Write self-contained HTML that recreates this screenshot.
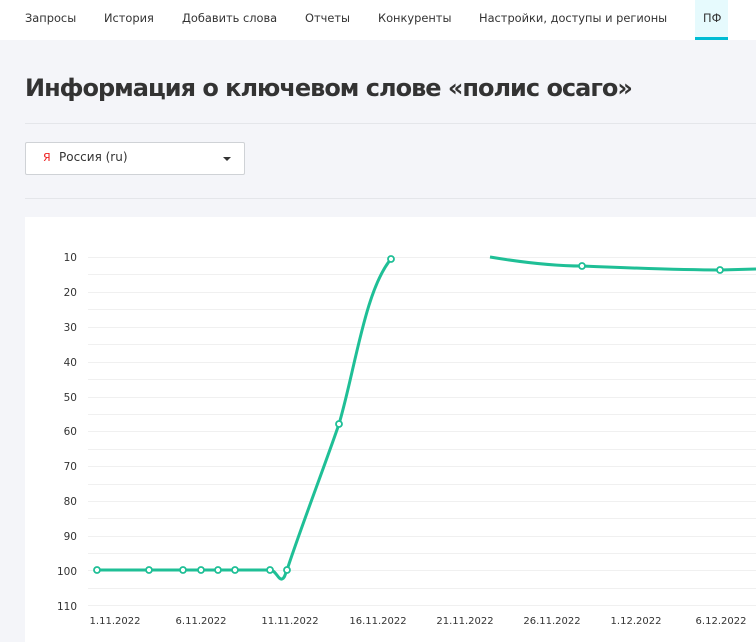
<!DOCTYPE html>
<html><head><meta charset="utf-8"><style>
*{margin:0;padding:0;box-sizing:border-box}
body{width:756px;height:642px;overflow:hidden;background:#f4f5f9;font-family:"DejaVu Sans","Liberation Sans",sans-serif;color:#333;position:relative}
.nav{position:absolute;left:0;top:0;width:756px;height:40px;background:#fff}
.nav span{position:absolute;top:11px;font-size:11.4px;color:#333;white-space:nowrap}
.act{position:absolute;left:695px;top:0;width:33px;height:40px;background:#e6fafd;border-bottom:3px solid #00bcd4}
h1{position:absolute;left:25px;top:74px;font-size:24px;font-weight:bold;color:#333;white-space:nowrap;letter-spacing:-1px}
.hr{position:absolute;left:25px;width:731px;height:1px;background:#e4e6ea}
.sel{position:absolute;left:25px;top:142px;width:220px;height:33px;background:#fff;border:1px solid #cfd2d6;border-radius:2px}
.sel .y{position:absolute;left:17px;top:8px;font-size:11px;color:#e22}
.sel .t{position:absolute;left:33px;top:7px;font-size:12px;color:#333}
.sel .c{position:absolute;left:197px;top:14px;width:0;height:0;border-left:4px solid transparent;border-right:4px solid transparent;border-top:4px solid #333}
.card{position:absolute;left:25px;top:217px;width:731px;height:425px;background:#fff}
</style></head><body>
<div class="nav">
<div class="act"></div>
<span style="left:25px">Запросы</span>
<span style="left:104px">История</span>
<span style="left:182px">Добавить слова</span>
<span style="left:305px">Отчеты</span>
<span style="left:378px">Конкуренты</span>
<span style="left:479px">Настройки, доступы и регионы</span>
<span style="left:703px">ПФ</span>
</div>
<h1>Информация о ключевом слове «полис осаго»</h1>
<div class="hr" style="top:123px"></div>
<div class="sel"><span class="y">Я</span><span class="t">Россия (ru)</span><span class="c"></span></div>
<div class="hr" style="top:198px"></div>
<div class="card"></div>
<svg style="position:absolute;left:0;top:0" width="756" height="642">
<g stroke="#f0f0f0" stroke-width="1">
<line x1="88" x2="756" y1="257.5" y2="257.5"/><line x1="88" x2="756" y1="274.5" y2="274.5"/>
<line x1="88" x2="756" y1="292.5" y2="292.5"/><line x1="88" x2="756" y1="309.5" y2="309.5"/>
<line x1="88" x2="756" y1="327.5" y2="327.5"/><line x1="88" x2="756" y1="344.5" y2="344.5"/>
<line x1="88" x2="756" y1="362.5" y2="362.5"/><line x1="88" x2="756" y1="379.5" y2="379.5"/>
<line x1="88" x2="756" y1="397.5" y2="397.5"/><line x1="88" x2="756" y1="414.5" y2="414.5"/>
<line x1="88" x2="756" y1="431.5" y2="431.5"/><line x1="88" x2="756" y1="449.5" y2="449.5"/>
<line x1="88" x2="756" y1="466.5" y2="466.5"/><line x1="88" x2="756" y1="484.5" y2="484.5"/>
<line x1="88" x2="756" y1="501.5" y2="501.5"/><line x1="88" x2="756" y1="518.5" y2="518.5"/>
<line x1="88" x2="756" y1="536.5" y2="536.5"/><line x1="88" x2="756" y1="553.5" y2="553.5"/>
<line x1="88" x2="756" y1="570.5" y2="570.5"/><line x1="88" x2="756" y1="588.5" y2="588.5"/>
<line x1="88" x2="756" y1="605.5" y2="605.5"/>
</g>
<g font-family="DejaVu Sans,sans-serif" font-size="10.5" fill="#333" text-anchor="end">
<text x="77" y="261">10</text><text x="77" y="296">20</text><text x="77" y="331">30</text>
<text x="77" y="366">40</text><text x="77" y="401">50</text><text x="77" y="435">60</text>
<text x="77" y="470">70</text><text x="77" y="505">80</text><text x="77" y="540">90</text>
<text x="77" y="575">100</text><text x="77" y="610">110</text>
</g>
<g font-family="DejaVu Sans,sans-serif" font-size="10" fill="#333" text-anchor="middle">
<text x="115" y="624">1.11.2022</text><text x="201" y="624">6.11.2022</text>
<text x="290" y="624">11.11.2022</text><text x="378" y="624">16.11.2022</text>
<text x="465" y="624">21.11.2022</text><text x="552" y="624">26.11.2022</text>
<text x="636" y="624">1.12.2022</text><text x="721" y="624">6.12.2022</text>
</g>
<g fill="none" stroke="#1fbf96" stroke-width="3" stroke-linejoin="round">
<path d="M97 570 L270 570 C276 570 278 580 282 579 C285 578 285 574 287 570 C300 530 325 465 339 424 C355 370 365 290 391 259"/>
<path d="M490 257 C520 262 550 266 582 266 C630 268 680 270 720 270 L756 269"/>
</g>
<g fill="#fff" stroke="#1fbf96" stroke-width="1.8">
<circle cx="97" cy="570" r="3"/><circle cx="149" cy="570" r="3"/><circle cx="183" cy="570" r="3"/>
<circle cx="201" cy="570" r="3"/><circle cx="218" cy="570" r="3"/><circle cx="235" cy="570" r="3"/>
<circle cx="270" cy="570" r="3"/><circle cx="287" cy="570" r="3"/><circle cx="339" cy="424" r="3"/>
<circle cx="391" cy="259" r="3"/><circle cx="582" cy="266" r="3"/><circle cx="720" cy="270" r="3"/>
</g>
</svg>
</body></html>
